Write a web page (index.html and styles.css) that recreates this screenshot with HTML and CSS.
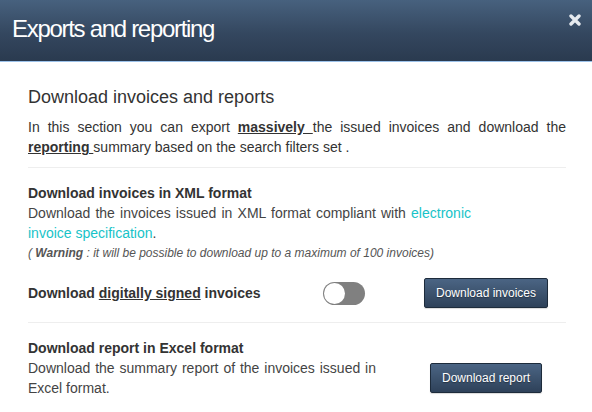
FILE: index.html
```html
<!DOCTYPE html>
<html>
<head>
<meta charset="utf-8">
<link rel="stylesheet" href="styles.css">
</head>
<body>
<div class="modal">
  <div class="modal-header">
    <h1 class="modal-title">Exports and reporting</h1>
    <span class="close"><svg width="12" height="12" viewBox="0 0 12 12"><path d="M2 2 L10 10 M10 2 L2 10" stroke="#e6eaef" stroke-width="3.4" stroke-linecap="round"/></svg></span>
  </div>
  <div class="modal-body">
    <h2 class="section-title">Download invoices and reports</h2>
    <p class="intro">In this section you can export <b class="u">massively </b>the issued invoices and download the <b class="u">reporting </b>summary based on the search filters set .</p>
    <hr class="sep">
    <div class="block">
      <div class="block-title">Download invoices in XML format</div>
      <div class="xml-desc">Download the invoices issued in XML format compliant with <span class="link">electronic invoice specification</span>.</div>
      <div class="warning">( <b>Warning</b> : it will be possible to download up to a maximum of 100 invoices)</div>
    </div>
    <div class="toggle-row">
      <div class="block-title">Download <span class="ul">digitally signed</span> invoices</div>
      <div class="toggle-cell"><span class="toggle"><span class="knob"></span></span></div>
      <div class="btn-cell"><button class="btn">Download invoices</button></div>
    </div>
    <hr class="sep sep2">
    <div class="report-row">
      <div>
        <div class="block-title">Download report in Excel format</div>
        <div class="desc">Download the summary report of the invoices issued in Excel format.</div>
      </div>
      <div class="btn-cell btn-cell-report"><button class="btn">Download report</button></div>
    </div>
  </div>
</div>
</body>
</html>
```

FILE: styles.css
```css
html, body {
  margin: 0;
  padding: 0;
  background: #fff;
}
body {
  font-family: "Liberation Sans", Arial, sans-serif;
  color: #333;
  font-size: 14px;
  line-height: 20px;
}
.modal {
  width: 592px;
  height: 412px;
  overflow: hidden;
}
.modal-header {
  height: 61px;
  background: linear-gradient(to bottom, #47617e 0%, #34475f 55%, #2a3a4f 100%);
  border-bottom: 1px solid #9cc2ea;
  display: flex;
  align-items: center;
  justify-content: space-between;
  padding: 0 11px 0 12px;
  box-sizing: content-box;
}
.modal-title {
  margin: 0;
  color: #fff;
  font-weight: normal;
  font-size: 24px;
  letter-spacing: -1.3px;
  line-height: 28px;
  margin-top: -4px;
}
.close {
  align-self: flex-start;
  margin-top: 14px;
  display: flex;
}
.modal-body {
  padding: 25px 26px 0 28px;
}
.section-title {
  margin: 0;
  font-size: 18px;
  font-weight: normal;
  line-height: 20px;
  color: #333;
}
.intro {
  margin: 10px 0 0;
  text-align: justify;
  color: #333;
}
.u {
  text-decoration: underline;
  color: #333;
}
.ul {
  text-decoration: underline;
}
.sep {
  border: 0;
  border-top: 1px solid #eeeeee;
  margin: 10px 0 15px;
}
.block-title {
  font-weight: bold;
  color: #333;
}
.xml-desc {
  width: 443px;
  text-align: justify;
  color: #444;
}
.link {
  color: #17c3c8;
}
.warning {
  font-style: italic;
  font-size: 12px;
  color: #555;
}
.toggle-row {
  display: grid;
  grid-template-columns: 295px 83px 160px;
  align-items: center;
  margin-top: 15px;
  height: 30px;
}
.toggle-cell {
  display: flex;
}
.toggle {
  width: 42px;
  height: 23px;
  border-radius: 12px;
  background: #808080;
  position: relative;
  display: block;
}
.knob {
  position: absolute;
  left: 1px;
  top: 1px;
  width: 21px;
  height: 21px;
  border-radius: 50%;
  background: #fff;
}
.btn-cell {
  display: flex;
  justify-content: center;
}
.btn {
  font-family: "Liberation Sans", Arial, sans-serif;
  font-size: 12px;
  color: #fff;
  background: linear-gradient(to bottom, #4b6584 0%, #2e4159 100%);
  border: 1px solid #1d2b3b;
  border-radius: 2px;
  height: 30px;
  padding: 0 11px;
  text-shadow: 0 1px 1px rgba(0,0,0,0.35);
  box-shadow: 0 1px 1px rgba(0,0,0,0.15);
}
.sep2 {
  margin: 14px 0 15px;
}
.report-row {
  display: grid;
  grid-template-columns: 378px 160px;
}
.desc {
  width: 348px;
  text-align: justify;
  color: #444;
}
.btn-cell-report {
  align-self: start;
  margin-top: 25px;
}
```
